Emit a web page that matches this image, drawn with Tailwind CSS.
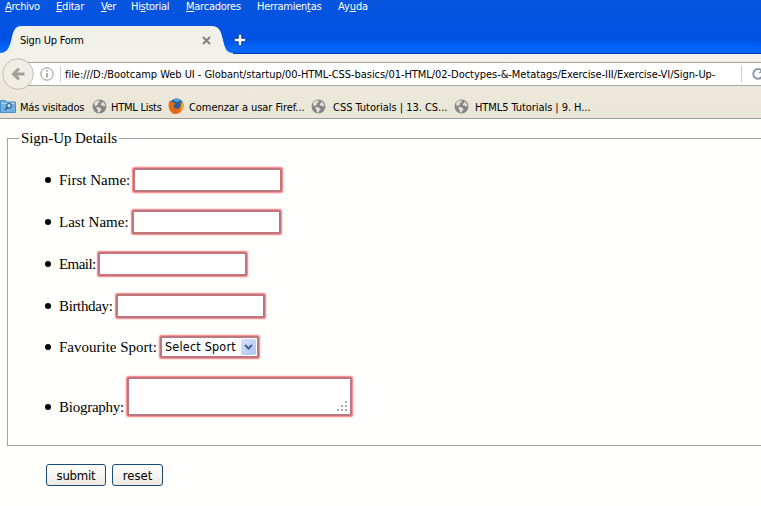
<!DOCTYPE html>
<html lang="es">
<head>
<meta charset="utf-8">
<title>Sign Up Form</title>
<script src="https://cdn.jsdelivr.net/npm/@tailwindcss/browser@4"></script>
</head>
<body class="w-[761px] h-[506px] overflow-hidden bg-[#fffffd] text-black font-['DejaVu_Sans_Condensed','DejaVu_Sans',sans-serif] text-[11px] leading-[14px]">
<svg class="hidden">
  <symbol id="globe" viewBox="0 0 15 15">
    <circle cx="7.5" cy="7.5" r="6.9" fill="#858585"/>
    <path d="M2 4.2C3.5 1.8 6 1.2 8 1.8L7.4 3.2 5.8 4 6.2 5.2 4.5 6.6 2.8 7.3ZM10 2.5l2 1.3 1.5 3-1.6 1-.9-1.4-2 .2-.4-2 1.6-.4ZM5.3 7.8l2.6.8 1.8 1.8-1.5 1.3-.7 2-1.6-.8-.5-2.4-1.2-1.4Z" fill="#e2e0d8"/>
  </symbol>
</svg>
<header class="h-[54px] bg-linear-to-b from-[#0855df] from-0% via-[#0052e4] via-75% to-[#0068ff] to-92% border-b border-[#0040b8] flex flex-col">
  <nav class="h-[26px] shrink-0 pl-[5px] flex text-white leading-[13px] whitespace-nowrap text-[11px]">
    <span class="w-[51px] tracking-[-0.3px]"><u>A</u>rchivo</span>
    <span class="w-[45px] tracking-[-0.2px]"><u>E</u>ditar</span>
    <span class="w-[30px] tracking-[-0.4px]"><u>V</u>er</span>
    <span class="w-[55px] tracking-[-0.3px]">Hi<u>s</u>torial</span>
    <span class="w-[71px] tracking-[-0.25px]"><u>M</u>arcadores</span>
    <span class="w-[81px] tracking-[-0.25px]">Herramien<u>t</u>as</span>
    <span class="tracking-[-0.1px]">Ay<u>u</u>da</span>
  </nav>
  <div class="h-[28px] shrink-0 flex">
    <div class="w-[233px] h-[28px] relative">
      <svg class="absolute inset-0" width="233" height="28" viewBox="0 0 233 28"><path d="M0 28V27C7 27 9 22 11 15C13 6 14 0 22 0H211C220 0 221 6 223 14C225 23 227 27 233 27V28Z" fill="#f2f1e9"/></svg>
      <div class="relative h-[28px] flex items-center pl-[20px]">
        <span class="w-[182px] pt-[2px] tracking-[-0.22px]">Sign Up Form</span>
        <svg width="9" height="9" viewBox="0 0 9 9" stroke="#808080" stroke-width="2"><path d="M1 1l7 7M8 1l-7 7"/></svg>
      </div>
    </div>
    <svg class="mt-[8px] ml-[1px]" width="12" height="12" viewBox="0 0 12 12"><path d="M4.5 .5h3v4h4v3h-4v4h-3v-4h-4v-3h4Z" fill="#fff" stroke="#194e9e" stroke-width=".8"/></svg>
  </div>
</header>
<div class="h-[65px] bg-linear-to-b from-[#f3f1ec] via-[#ece9da] via-55% to-[#e9e6d7] border-b border-[#9d9c96]">
  <div class="h-[33px] pt-[5px] relative flex">
    <div class="mt-[3px] ml-[20px] w-[760px] h-[24px] shrink-0 bg-white border-y border-[#a8a79f] flex items-center">
      <svg class="ml-[20px] shrink-0" width="14" height="14" viewBox="0 0 14 14" fill="none" stroke="#929292"><circle cx="7" cy="7" r="6.2"/><path d="M7 6v4.5M7 3.3v1.5" stroke-width="1.5"/></svg>
      <span class="ml-[6px] w-px h-[16px] bg-[#d0d0d0]"></span>
      <span class="ml-[4px] pt-[2px] w-[651px] shrink-0 whitespace-nowrap tracking-[-0.045px]">file:///D:/Bootcamp Web UI - Globant/startup/00-HTML-CSS-basics/01-HTML/02-Doctypes-&amp;-Metatags/Exercise-III/Exercise-VI/Sign-Up-</span>
      <span class="ml-[25px] w-px h-[16px] bg-[#cccccc]"></span>
      <svg class="ml-[10px] shrink-0" width="12" height="12" viewBox="0 0 12 12"><path d="M10.2 8.4A4.8 4.8 0 1 1 9.8 2.8" fill="none" stroke="#8f98a5" stroke-width="2"/><path d="M11.5 0v5h-5Z" fill="#8f98a5"/></svg>
    </div>
    <svg class="absolute left-[2px] top-[4px]" width="32" height="32" viewBox="0 0 32 32"><circle cx="16" cy="16" r="15.3" fill="#efede4" stroke="#c1beb4"/><path d="M22.500 16H11M17 10.500L11.500 16l5.500 5.500" fill="none" stroke="#a09f9a" stroke-width="3"/></svg>
  </div>
  <div class="h-[31px] flex items-center whitespace-nowrap pt-[8px] pb-[1px]">
    <svg width="16" height="14" viewBox="0 0 16 14"><path d="M.5 1.500h5l1 1.500h9v10.500h-15Z" fill="#75b1df" stroke="#4c8fc5"/><path d="M1 4.500h14" stroke="#a6d2f2"/><circle cx="9" cy="6.800" r="2.300" fill="#c9e5f8" stroke="#245d96" stroke-width="1.200"/><path d="M7.300 8.500L5 11" stroke="#245d96" stroke-width="1.700"/></svg>
    <span class="ml-[4px] mt-[3px] w-[72px] tracking-[-0.2px]">Más visitados</span>
    <svg width="15" height="15"><use href="#globe"/></svg>
    <span class="ml-[4px] mt-[3px] w-[57px] tracking-[-0.25px]">HTML Lists</span>
    <svg width="16" height="16" viewBox="0 0 16 16"><circle cx="8.500" cy="7.500" r="7" fill="#285f9e"/><path d="M5 2C7 .5 11 0 13 2L10 4 7 3.500Z" fill="#4aa4d8"/><path d="M1.500 2.500L3.500 4 6 4.500 7.500 6 5.500 7.500C5.500 10 8 11.500 10.500 10.500 13 9.500 13 6 12 4L15 6C16.500 11 13 16 8 16 2 16-1 9 1.500 2.500Z" fill="#e66a13"/><path d="M13.500 3.500C16 7 15.500 11 12 13.500 14 9.500 14 7 13.500 3.500Z" fill="#ffc52f"/></svg>
    <span class="ml-[5px] mt-[3px] w-[122px] tracking-[-0.06px]">Comenzar a usar Firef...</span>
    <svg width="15" height="15"><use href="#globe"/></svg>
    <span class="ml-[7px] mt-[3px] w-[121px] tracking-[-0.03px]">CSS Tutorials | 13. CS...</span>
    <svg width="15" height="15"><use href="#globe"/></svg>
    <span class="ml-[6px] mt-[3px] tracking-[-0.07px]">HTML5 Tutorials | 9. H...</span>
  </div>
</div>
<form class="font-['Liberation_Serif',serif] text-[15px] leading-[18px] pt-[10px] pl-[7px]">
  <fieldset class="w-[770px] h-[317px] border border-[#a4a49e] pl-[11px]">
    <legend class="h-[18px] px-[2px] w-[100px] whitespace-nowrap tracking-[-0.07px]">Sign-Up Details</legend>
    <ul class="pt-[12px] pl-[26px] whitespace-nowrap">
      <li class="h-[42px] flex items-center"><i class="size-[6px] rounded-full bg-black mr-[8px]"></i><label class="w-[74px]">First Name:</label><input class="w-[149px] h-[24px] rounded-[2px] border-2 border-[#bb7680] bg-white shadow-[0_0_1.5px_0.5px_#ff7777]"></li>
      <li class="h-[42px] flex items-center"><i class="size-[6px] rounded-full bg-black mr-[8px]"></i><label class="w-[73px]">Last Name:</label><input class="w-[149px] h-[24px] rounded-[2px] border-2 border-[#bb7680] bg-white shadow-[0_0_1.5px_0.5px_#ff7777]"></li>
      <li class="h-[42px] flex items-center"><i class="size-[6px] rounded-full bg-black mr-[8px]"></i><label class="w-[39px] tracking-[-0.55px]">Email:</label><input class="w-[149px] h-[24px] rounded-[2px] border-2 border-[#bb7680] bg-white shadow-[0_0_1.5px_0.5px_#ff7777]"></li>
      <li class="h-[42px] flex items-center"><i class="size-[6px] rounded-full bg-black mr-[8px]"></i><label class="w-[57px] tracking-[-0.35px]">Birthday:</label><input class="w-[149px] h-[24px] rounded-[2px] border-2 border-[#bb7680] bg-white shadow-[0_0_1.5px_0.5px_#ff7777]"></li>
      <li class="h-[40px] flex items-center"><i class="size-[6px] rounded-full bg-black mr-[8px]"></i><label class="w-[101px]">Favourite Sport:</label>
        <div class="w-[99px] h-[22px] rounded-[2px] border-2 border-[#bb7680] bg-white shadow-[0_0_1.5px_0.5px_#ff7777] flex items-center pl-[3px] font-['DejaVu_Sans_Condensed','DejaVu_Sans',sans-serif] text-[12.5px]"><span class="w-[76px] tracking-[0.2px]">Select Sport</span><span class="w-[15px] h-[16px] rounded-[2px] bg-linear-to-br from-[#d5e2fd] to-[#acc4f4] flex items-center justify-center"><svg width="9" height="6" viewBox="0 0 9 6"><path d="M1 1l3.500 3.500L8 1" fill="none" stroke="#4b607f" stroke-width="2"/></svg></span></div></li>
      <li class="h-[59px] flex items-end"><i class="size-[6px] rounded-full bg-black mr-[8px] mb-[16px]"></i><label class="w-[68px] mb-[10px] tracking-[-0.25px]">Biography:</label>
        <div class="w-[225px] h-[39px] mb-[10px] rounded-[2px] border-2 border-[#bb7680] bg-white shadow-[0_0_1.5px_0.5px_#ff7777] flex items-end justify-end p-[3px]"><svg width="10" height="10" viewBox="0 0 10 10" fill="#aaa"><path d="M8 0h2v2H8ZM8 4h2v2H8ZM4 4h2v2H4ZM0 8h2v2H0ZM4 8h2v2H4ZM8 8h2v2H8Z"/></svg></div></li>
    </ul>
  </fieldset>
  <div class="mt-[18px] pl-[39px] flex gap-[6px] font-['DejaVu_Sans_Condensed','DejaVu_Sans',sans-serif] text-[13px]">
    <button type="button" class="w-[60px] h-[22px] rounded-[3px] border border-[#1b4a75] bg-linear-to-b from-white to-[#ebeae2] leading-[18px] pt-px tracking-[-0.2px]">submit</button>
    <button type="button" class="w-[51px] h-[22px] rounded-[3px] border border-[#1b4a75] bg-linear-to-b from-white to-[#ebeae2] leading-[18px] pt-px">reset</button>
  </div>
</form>
</body>
</html>
